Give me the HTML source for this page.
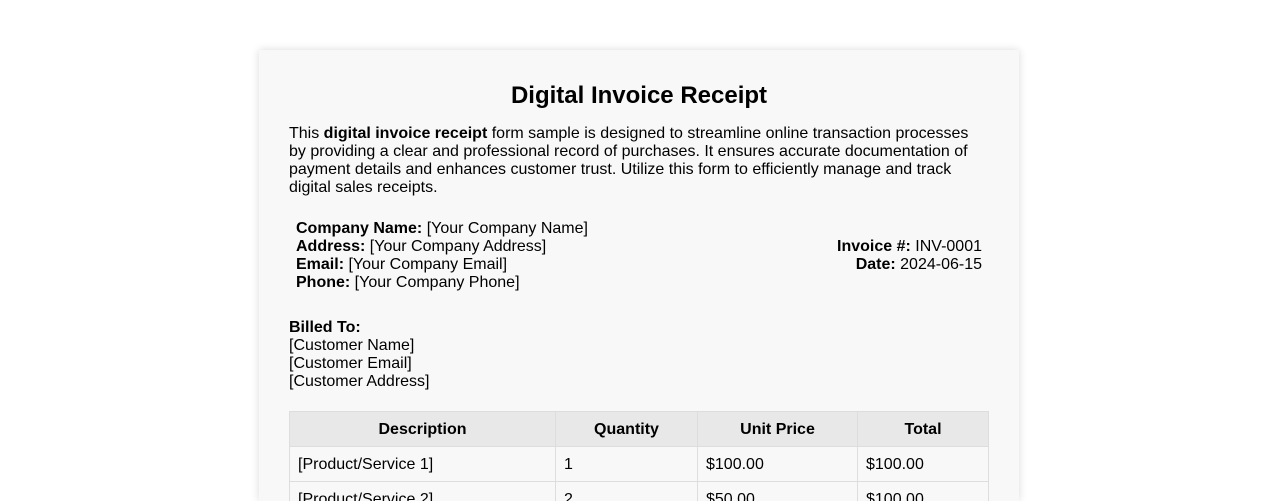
<!DOCTYPE html>
<html><head><style>
html,body{margin:0;height:501px;overflow:hidden;}
body{background:#fff;font-family:"Liberation Sans",Arial,sans-serif;color:#000;position:relative;}
.c{position:absolute;left:259px;top:50px;width:700px;padding:0 30px;background:#f8f8f8;box-shadow:0 0 8px rgba(0,0,0,0.15);height:451px;overflow:hidden;}
h1{font-size:24px;text-align:center;margin:0;position:absolute;left:0;right:0;top:32px;line-height:28px;}
p{position:absolute;left:30px;width:700px;top:75px;margin:0;font-size:16px;line-height:18px;}
.co{position:absolute;left:37px;top:170px;font-size:16px;line-height:18px;}
.inv{position:absolute;right:37px;top:188px;font-size:16px;line-height:18px;text-align:right;}
.bt{position:absolute;left:30px;top:269px;font-size:16px;line-height:18px;}
table{position:absolute;left:30px;top:361px;width:699px;border-collapse:collapse;font-size:16px;table-layout:fixed;}
td,th{border:1px solid #ddd;padding:1px 8px 0;height:35px;box-sizing:border-box;}
th{background:#e8e8e8;text-align:center;}
td{text-align:left;}
</style></head><body>
<div class="c">
<h1>Digital Invoice Receipt</h1>
<p>This <b>digital invoice receipt</b> form sample is designed to streamline online transaction processes by providing a clear and professional record of purchases. It ensures accurate documentation of payment details and enhances customer trust. Utilize this form to efficiently manage and track digital sales receipts.</p>
<div class="co"><b>Company Name:</b> [Your Company Name]<br><b>Address:</b> [Your Company Address]<br><b>Email:</b> [Your Company Email]<br><b>Phone:</b> [Your Company Phone]</div>
<div class="inv"><b>Invoice #:</b> INV-0001<br><b>Date:</b> 2024-06-15</div>
<div class="bt"><b>Billed To:</b><br>[Customer Name]<br>[Customer Email]<br>[Customer Address]</div>
<table>
<colgroup><col style="width:266px"><col style="width:142px"><col style="width:160px"><col style="width:131px"></colgroup>
<tr><th>Description</th><th>Quantity</th><th>Unit Price</th><th>Total</th></tr>
<tr><td>[Product/Service 1]</td><td>1</td><td>$100.00</td><td>$100.00</td></tr>
<tr><td>[Product/Service 2]</td><td>2</td><td>$50.00</td><td>$100.00</td></tr>
</table>
</div>
</body></html>
